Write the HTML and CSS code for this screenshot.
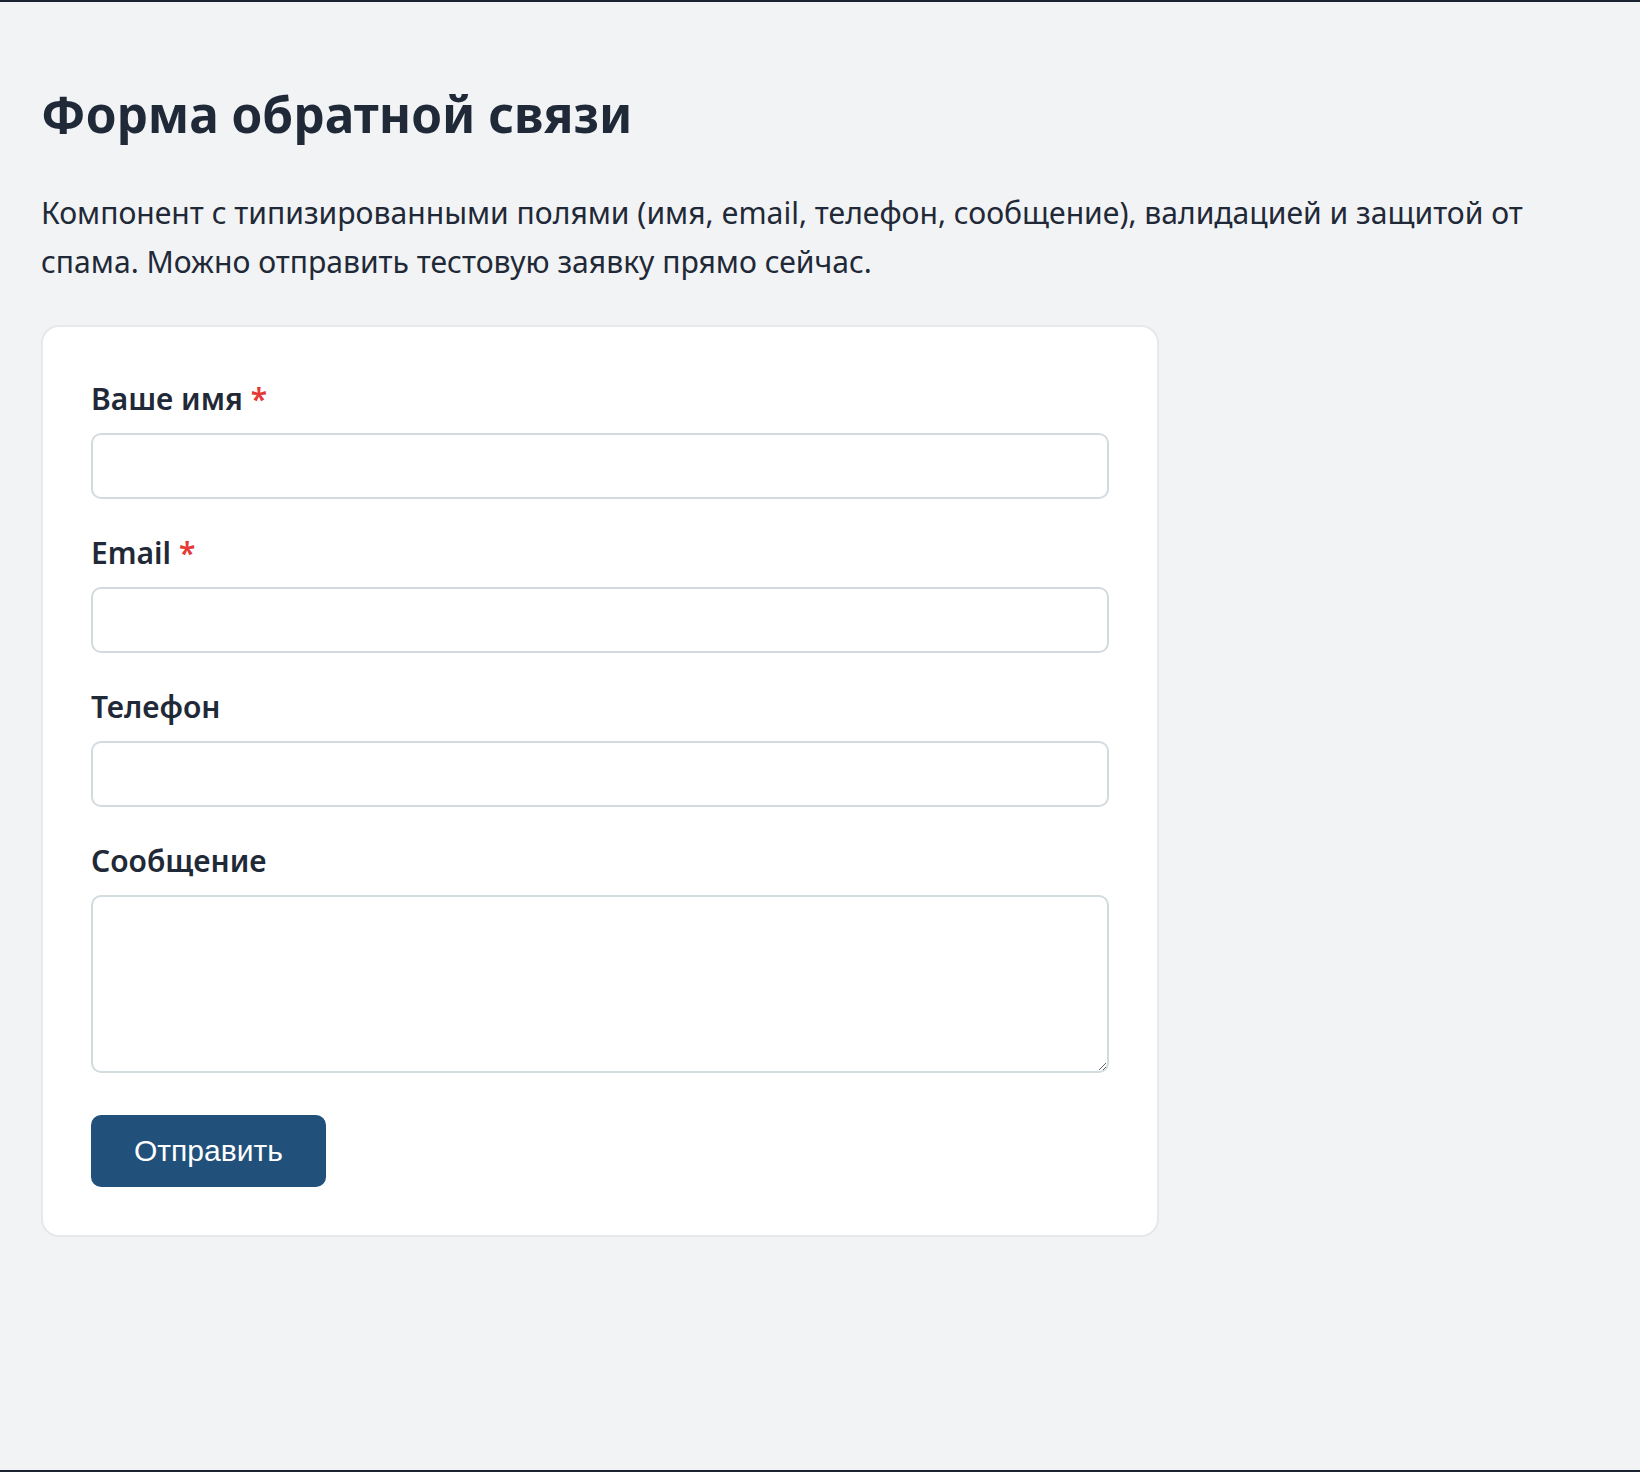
FILE: index.html
```html
<!DOCTYPE html>
<html lang="ru">
<head>
    <meta charset="UTF-8">
    <meta name="viewport" content="width=device-width, initial-scale=1.0">
    <title>Форма обратной связи</title>
    <link rel="stylesheet" href="styles.css">
</head>
<body>
    <main class="page">
        <h1 class="title">Форма обратной связи</h1>
        <p class="lead">Компонент с типизированными полями (имя, email, телефон, сообщение), валидацией и защитой от спама. Можно отправить тестовую заявку прямо сейчас.</p>

        <form class="card" onsubmit="return false;">
            <div class="field">
                <label for="name">Ваше имя <span class="req">*</span></label>
                <input type="text" id="name" class="input">
            </div>
            <div class="field">
                <label for="email">Email <span class="req">*</span></label>
                <input type="email" id="email" class="input">
            </div>
            <div class="field">
                <label for="phone">Телефон</label>
                <input type="tel" id="phone" class="input">
            </div>
            <div class="field">
                <label for="message">Сообщение</label>
                <textarea id="message" class="input textarea"></textarea>
            </div>
            <button type="submit" class="submit">Отправить</button>
        </form>
    </main>
</body>
</html>
```

FILE: styles.css
```css
html, body {
    margin: 0;
    padding: 0;
}

body {
    box-sizing: border-box;
    min-height: 100vh;
    background-color: #f2f3f5;
    border-top: 2px solid #1c2433;
    border-bottom: 2px solid #1c2433;
    font-family: "Noto Sans", "Open Sans", sans-serif;
    color: #1f2937;
}

.page {
    padding: 82px 41px 40px;
}

.title {
    margin: 0;
    font-size: 49.5px;
    line-height: 60px;
    font-weight: 700;
    color: #1f2937;
}

.lead {
    margin: 44px 0 39px;
    max-width: 1550px;
    font-size: 30.1px;
    line-height: 49px;
}

.card {
    width: 1118px;
    box-sizing: border-box;
    padding: 48px;
    background: #ffffff;
    border: 2px solid #e6e8eb;
    border-radius: 18px;
}

.field {
    display: flex;
    flex-direction: column;
    gap: 13px;
    margin-bottom: 30px;
}

.field label {
    padding-top: 3px;
    font-size: 30px;
    line-height: 42px;
    font-weight: 600;
    color: #1f2937;
}

.req {
    color: #e53935;
}

.input {
    box-sizing: border-box;
    width: 100%;
    height: 66px;
    border: 2px solid #d3dbdf;
    border-radius: 10px;
    background: #ffffff;
    font-family: inherit;
    font-size: 26px;
    padding: 0 16px;
}

.textarea {
    height: 178px;
    padding: 14px 16px;
    resize: vertical;
}

.submit {
    margin-top: 12px;
    height: 72px;
    padding: 0 43px;
    background-color: #21507a;
    color: #ffffff;
    border: none;
    border-radius: 10px;
    font-family: "Liberation Sans", Arial, sans-serif;
    font-size: 30px;
    cursor: pointer;
}
```
